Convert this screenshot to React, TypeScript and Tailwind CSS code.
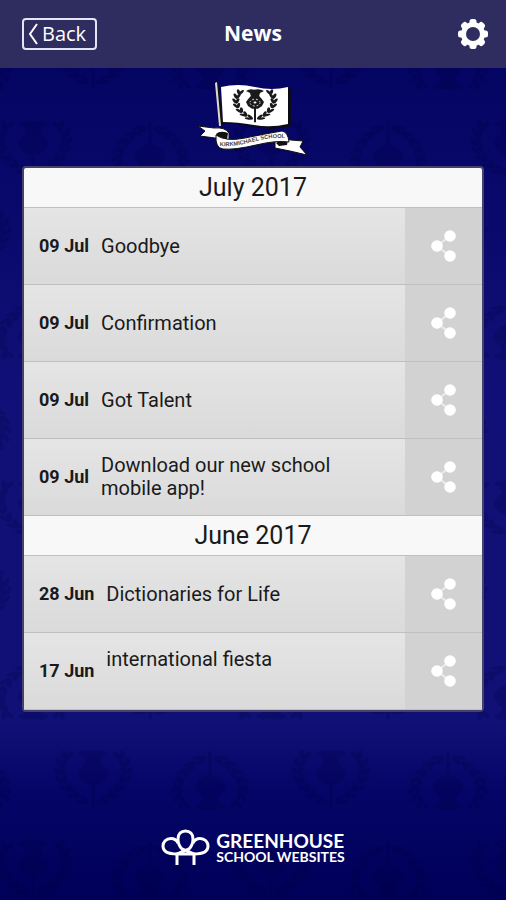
type NewsItem = { date: string; title: string; lines?: number };

const MONTHS: { name: string; items: NewsItem[] }[] = [
  {
    name: "July 2017",
    items: [
      { date: "09 Jul", title: "Goodbye" },
      { date: "09 Jul", title: "Confirmation" },
      { date: "09 Jul", title: "Got Talent" },
      { date: "09 Jul", title: "Download our new school mobile app!" },
    ],
  },
  {
    name: "June 2017",
    items: [
      { date: "28 Jun", title: "Dictionaries for Life" },
      { date: "17 Jun", title: "international fiesta", lines: 2 },
    ],
  },
];

const LEAVES = [
  [-15, -21, 12],
  [-18, -15, 4],
  [-19, -8, -4],
  [-18, -1, -14],
  [-15, 6, -28],
  [-11, 12, -42],
  [-6, 17, -58],
];

// Thistle between two laurel branches, centred on 0,0
function Thistle() {
  return (
    <g>
      <path d="M-9-22Q-5-26-1-24Q5-26 9-22L5-19 4-14H-4L-5-19Z" />
      <path d="M-4-15H4L7-10 9-6 7 0 3 4H-3L-7 0-9-6-7-10Z" />
      <path d="M-1 3H1V24H-1Z" />
      {[-1, 1].map((side) => (
        <g key={side} transform={`scale(${side} 1)`}>
          {LEAVES.map(([x, y, r]) => (
            <g key={y} transform={`translate(${x} ${y}) rotate(${r})`}>
              <ellipse cx="-1.5" cy="0" rx="1.6" ry="4" transform="rotate(-22)" />
              <ellipse cx="1.5" cy="0" rx="1.6" ry="4" transform="rotate(22)" />
            </g>
          ))}
        </g>
      ))}
    </g>
  );
}

function Backdrop() {
  const spots = [
    [93, 60, 1],
    [210, 60, -1],
    [-28, 60, -1],
    [33, 150, 1],
    [271, 150, 1],
    [150, 150, -1],
    [93, 240, -1],
    [210, 240, 1],
    [-28, 240, 1],
    [33, 330, -1],
    [271, 330, -1],
    [150, 330, 1],
  ];
  return (
    <svg aria-hidden="true" className="h-full w-full text-[#00003c] opacity-20 [grid-area:1/1]">
      <defs>
        <pattern id="thistles" width="238" height="360" patternUnits="userSpaceOnUse">
          {spots.map(([x, y, flip]) => (
            <g key={`${x}-${y}`} fill="currentColor" transform={`translate(${x} ${y}) scale(1.75 ${flip * 1.2})`}>
              <Thistle />
            </g>
          ))}
        </pattern>
      </defs>
      <rect width="100%" height="100%" fill="url(#thistles)" />
    </svg>
  );
}

function SchoolCrest() {
  return (
    <svg viewBox="0 0 110 74" className="h-[74px] w-[110px]" role="img" aria-label="School crest">
      <path d="M17 1L20 0 26 44H22Z" fill="#111" />
      <path d="M17 1L19 0 23 44H21Z" fill="#ddd8d0" />
      <path d="M24 5Q40 2 57 6T93 6V44Q74 49 56 45T25 42Z" fill="#0a0a18" />
      <path d="M23 5Q40 1 57 5T90 5V42Q73 46 56 43T25 40Z" fill="#fff" />
      <g transform="translate(57 24) scale(1 .68)" fill="#1a1a1a">
        <Thistle />
        <circle cy="-5" r="5" fill="none" stroke="#fff" strokeDasharray="2 2" />
        <circle cy="-5" r="1.5" fill="#fff" />
      </g>
      <path d="M0 44L16 46Q27 45 31 51V58L17 56 2 54 7 49Z" fill="#fff" stroke="#111" />
      <path d="M18 52Q22 48 30 51L29 58 20 56Z" fill="#111" />
      <path d="M77 55L93 58 105 59 102 65 109 73 92 69 77 66Z" fill="#fff" stroke="#111" />
      <path d="M78 61Q83 57 90 58L89 63 81 64Z" fill="#111" />
      <path d="M18 53Q28 60 47 56T84 49Q90 50 91 60Q79 58 58 63T25 67Q17 66 18 53Z" fill="#fff" stroke="#111" />
      <path id="ribbon" d="M22 64Q36 65 54 60T89 56" fill="none" />
      <text fontSize="5.7" fontWeight="700" fill="#444" className="font-['Liberation_Sans',sans-serif]">
        <textPath href="#ribbon">KIRKMICHAEL SCHOOL</textPath>
      </text>
    </svg>
  );
}

function GearIcon() {
  return (
    <svg viewBox="0 0 30 30" className="size-[30px]" aria-hidden="true">
      <g fill="#fff">
        {[0, 45, 90, 135].map((angle) => (
          <rect key={angle} x="11.5" y="0" width="7" height="30" rx="2.5" transform={`rotate(${angle} 15 15)`} />
        ))}
        <circle cx="15" cy="15" r="12" />
      </g>
      <circle cx="15" cy="15" r="7" fill="#2f2d60" />
    </svg>
  );
}

function ShareIcon() {
  return (
    <svg viewBox="0 0 26 32" className="h-8 w-[26px]" aria-hidden="true">
      <path d="M19 6L6 16 19 26" fill="none" stroke="#ececec" strokeWidth="2" />
      <g fill="#fff">
        <circle cx="19" cy="6" r="5.8" />
        <circle cx="6" cy="16" r="5.8" />
        <circle cx="19" cy="26" r="5.8" />
      </g>
    </svg>
  );
}

function TreesLogo() {
  return (
    <svg viewBox="0 0 49 37" className="h-[37px] w-[49px]" fill="none" stroke="#fff" strokeWidth="3" aria-hidden="true">
      <path d="M16 36V25L28 20C31 17 32 13 32 10C32 5 29 2 24.500 2S17 5 17 10C17 13 18 17 21 20L33 25V36" />
      <path d="M17 14C15 10 12 9.500 10 9.500C5 9.500 2 13 2 17C2 22 7 25 16 25H33C42 25 47 22 47 17C47 13 44 9.500 39 9.500C37 9.500 34 10 32 14" />
    </svg>
  );
}

function NewsRow({ item }: { item: NewsItem }) {
  return (
    <li className="flex h-[77px] border-t border-[#bfbfbf]">
      <a href="#" className="flex min-w-0 flex-1 items-center gap-3 bg-linear-to-b from-[#e5e5e5] to-[#dadada] pl-[15px]">
        <span className="shrink-0 text-lg font-bold">{item.date}</span>
        <span className={`max-w-[260px] text-[20px] leading-[23px] ${item.lines === 2 ? "min-h-[46px]" : ""}`}>
          {item.title}
        </span>
      </a>
      <button type="button" aria-label={`Share ${item.title}`} className="flex w-[77px] items-center justify-center bg-[#d2d2d2]">
        <ShareIcon />
      </button>
    </li>
  );
}

export default function App() {
  return (
    <div className="grid min-h-screen bg-[linear-gradient(#02025f,#08086a_20%,#101078_45%,#101076_80%,#050568_88%,#000058)] font-[Roboto,sans-serif]">
      <Backdrop />
      <div className="relative flex min-w-0 flex-col [grid-area:1/1]">
        <header className="grid h-[68px] grid-cols-3 items-center bg-[#2f2d60] px-[18px] text-white">
          <button
            type="button"
            className="ml-1 flex h-8 w-[75px] items-center gap-1 justify-self-start rounded-sm border-2 border-[#e4e4f4] pl-1 font-['Open_Sans',sans-serif] text-[20px]"
          >
            <svg viewBox="0 0 10 22" className="h-[22px] w-[10px]" fill="none" stroke="#fff" strokeWidth="2" aria-hidden="true">
              <path d="M9 1L2 11 9 21" />
            </svg>
            Back
          </button>
          <h1 className="text-center font-['Open_Sans',sans-serif] text-[21px] font-bold">News</h1>
          <button type="button" aria-label="Settings" className="justify-self-end">
            <GearIcon />
          </button>
        </header>

        <div className="flex justify-center pt-[14px] pb-[10px]">
          <SchoolCrest />
        </div>

        <main className="mx-[22px] rounded-sm border-2 border-[#44446a] bg-[#f8f8f8] text-[#1a1a1a]">
          {MONTHS.map((month) => (
            <section key={month.name}>
              <h2 className="text-center text-[25px] leading-[39px]">{month.name}</h2>
              <ul className="border-b border-[#bfbfbf]">
                {month.items.map((item) => (
                  <NewsRow key={item.title} item={item} />
                ))}
              </ul>
            </section>
          ))}
        </main>

        <footer className="mt-auto flex items-center justify-center gap-[6px] pb-[34px] text-white">
          <TreesLogo />
          <p className="font-[Lato,sans-serif] font-bold">
            <span className="block text-[19px] leading-[18px]">GREENHOUSE</span>
            <span className="block text-[14px] leading-[14px]">SCHOOL WEBSITES</span>
          </p>
        </footer>
      </div>
    </div>
  );
}
